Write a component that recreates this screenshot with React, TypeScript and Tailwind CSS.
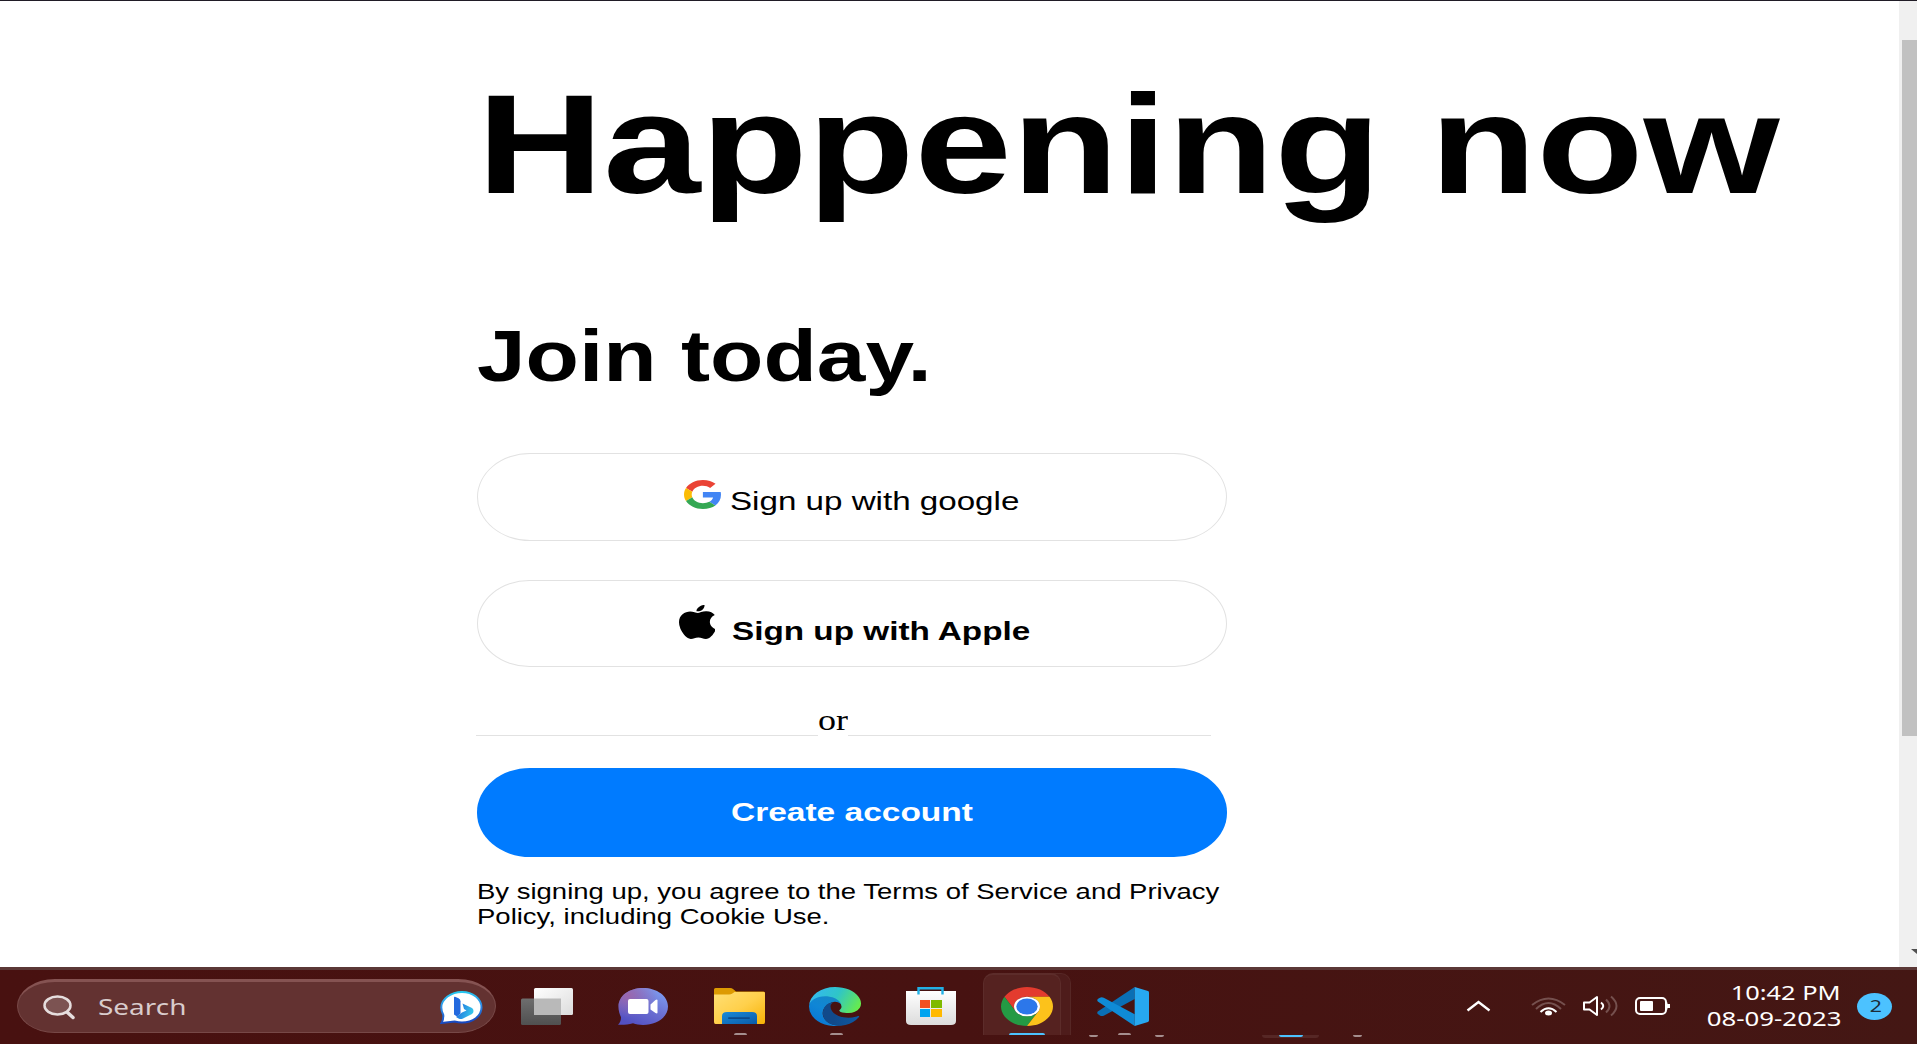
import type { ReactNode } from "react";

const SANS = "font-['Liberation_Sans',Arial,sans-serif]";

function GoogleIcon() {
  return (
    <svg className="h-[29px] w-[37px] shrink-0" viewBox="0 0 47 48" preserveAspectRatio="none">
      <path fill="#EA4335" d="M24 9.5c3.54 0 6.71 1.22 9.21 3.6l6.85-6.85C35.9 2.38 30.47 0 24 0 14.62 0 6.51 5.38 2.56 13.22l7.98 6.19C12.43 13.72 17.74 9.5 24 9.5z" />
      <path fill="#4285F4" d="M46.98 24.55c0-1.57-.15-3.09-.38-4.55H24v9.02h12.94c-.58 2.96-2.26 5.48-4.78 7.18l7.73 6c4.51-4.18 7.09-10.36 7.09-17.65z" />
      <path fill="#FBBC05" d="M10.53 28.59c-.48-1.45-.76-2.99-.76-4.59s.27-3.14.76-4.59l-7.98-6.19C.92 16.46 0 20.12 0 24c0 3.88.92 7.54 2.56 10.78l7.97-6.19z" />
      <path fill="#34A853" d="M24 48c6.48 0 11.93-2.13 15.89-5.81l-7.73-6c-2.15 1.45-4.92 2.3-8.16 2.3-6.26 0-11.57-4.22-13.47-9.91l-7.98 6.19C6.51 42.62 14.62 48 24 48z" />
    </svg>
  );
}

function AppleIcon() {
  return (
    <svg className="h-[34px] w-[36px] shrink-0" viewBox="4 32 367 448" preserveAspectRatio="none">
      <path transform="translate(0 -33.6) scale(1 1.07)" d="M318.7 268.7c-.2-36.7 16.4-64.4 50-84.8-18.8-26.9-47.2-41.7-84.7-44.6-35.5-2.8-74.3 20.7-88.5 20.7-15 0-49.4-19.7-76.4-19.7C63.3 141.2 4 184.8 4 273.5q0 39.3 14.4 81.2c12.8 36.7 59 126.7 107.2 125.2 25.2-.6 43-17.9 75.8-17.9 31.8 0 48.3 17.9 76.4 17.9 48.6-.7 90.4-82.5 102.6-119.3-65.2-30.7-61.7-90-61.7-91.9z" />
      <path transform="translate(15 3) scale(.87 .87)" d="M262.1 104.500c27.3-32.4 24.8-61.9 24-72.5-24.1 1.4-52 16.400-67.9 34.9-17.500 19.8-27.8 34.300-25.6 61.9 26.1 2 49.900-1.400 69.500-24.300z" />
    </svg>
  );
}

function TaskViewIcon() {
  return (
    <svg className="h-[37px] w-[52px]" viewBox="0 0 52 37">
      <defs>
        <linearGradient id="tvw" x1="0" y1="0" x2="1" y2="1">
          <stop offset="0" stopColor="#ffffff" />
          <stop offset="1" stopColor="#dcdcdc" />
        </linearGradient>
        <linearGradient id="tvg" x1="0" y1="0" x2="0" y2="1">
          <stop offset="0" stopColor="#6e6e6e" />
          <stop offset="1" stopColor="#505050" />
        </linearGradient>
      </defs>
      <rect x="0" y="10.500" width="40" height="26.500" rx="1.500" fill="url(#tvg)" />
      <rect x="13" y="0" width="39" height="27" rx="1.500" fill="url(#tvw)" />
      <rect x="13" y="10.500" width="27" height="16.500" fill="#b9b9b9" />
    </svg>
  );
}

function ChatIcon() {
  return (
    <svg className="h-[37px] w-[50px]" viewBox="0 0 50 37">
      <defs>
        <linearGradient id="chat" x1="0.9" y1="0.1" x2="0.3" y2="1">
          <stop offset="0" stopColor="#7d9cf0" />
          <stop offset="0.5" stopColor="#6b6fd2" />
          <stop offset="1" stopColor="#5350c2" />
        </linearGradient>
        <radialGradient id="chatp" cx="0.2" cy="0.2" r="0.6">
          <stop offset="0" stopColor="#a065a8" stopOpacity="0.9" />
          <stop offset="1" stopColor="#a065a8" stopOpacity="0" />
        </radialGradient>
      </defs>
      <path d="M25 0C39 0 50 8 50 18.500S39 37 25 37c-4 0-7-.6-10-1.700-5 1.500-10 1.700-15 1.500 2-2 3-4.500 3-7.500C1.500 26 .5 22.500.5 18.500.5 8 11 0 25 0z" fill="url(#chat)" />
      <path d="M25 0C39 0 50 8 50 18.500S39 37 25 37c-4 0-7-.6-10-1.700-5 1.500-10 1.700-15 1.500 2-2 3-4.500 3-7.500C1.500 26 .5 22.500.5 18.500.5 8 11 0 25 0z" fill="url(#chatp)" />
      <rect x="10" y="11" width="20.500" height="15" rx="2" fill="#fff" />
      <path d="M32.500 16.500l5-4.500q2-1 2 .5v12q0 1.500-2 .5l-5-3.500z" fill="#fff" />
    </svg>
  );
}

function FolderIcon() {
  return (
    <svg className="h-[36px] w-[51px]" viewBox="0 0 51 36">
      <defs>
        <linearGradient id="fold" x1="0" y1="0" x2="1" y2="1">
          <stop offset="0" stopColor="#ffdf75" />
          <stop offset="0.5" stopColor="#ffd04c" />
          <stop offset="1" stopColor="#f7b205" />
        </linearGradient>
        <linearGradient id="foldb" x1="0" y1="0" x2="1" y2="1">
          <stop offset="0" stopColor="#1a8ad8" />
          <stop offset="1" stopColor="#0a5ba8" />
        </linearGradient>
      </defs>
      <path d="M0 1.500Q0 0 1.500 0H16q2 0 3 1l3 2.500H49.500q1.500 0 1.500 1.500V10H0z" fill="#dd9a02" />
      <path d="M0 6.500H15q2 0 3-.8l2.500-1.700H49.500q1.500 0 1.500 1V34q0 2-1.500 2H1.500Q0 36 0 34z" fill="url(#fold)" />
      <path d="M8 36V28q0-4 5-4h25q5 0 5 4v8z" fill="url(#foldb)" />
      <rect x="14" y="29.200" width="22" height="1.800" rx=".9" fill="#0b4a8c" />
    </svg>
  );
}

function EdgeIcon() {
  return (
    <svg className="h-[39px] w-[52px]" viewBox="0 0 256 256" preserveAspectRatio="none">
      <defs>
        <linearGradient id="e1" x1="0.3" y1="0.5" x2="1" y2="0.5">
          <stop offset="0" stopColor="#114a8b" />
          <stop offset="1" stopColor="#0c59a4" />
        </linearGradient>
        <linearGradient id="e2" x1="0.7" y1="0.1" x2="0.2" y2="0.9">
          <stop offset="0" stopColor="#1687c8" />
          <stop offset="0.5" stopColor="#0f86d6" />
          <stop offset="1" stopColor="#0a78d4" />
        </linearGradient>
        <linearGradient id="e3" x1="0" y1="0.3" x2="1" y2="0.6">
          <stop offset="0" stopColor="#35b8f1" />
          <stop offset="0.5" stopColor="#2fc5c8" />
          <stop offset="1" stopColor="#66eb4e" />
        </linearGradient>
      </defs>
      <path fill="url(#e2)" d="M105.7 241.4a79.2 79.2 0 0 1-22.7-21.3 80.700 80.700 0 0 1 29.500-120c3.200-1.500 8.500-4.100 15.600-4a32.400 32.400 0 0 1 25.700 13 31.900 31.900 0 0 1 6.300 18.700c0-.2 24.500-79.600-80-79.600-43.900 0-80 41.700-80 78.200a130.200 130.200 0 0 0 12.100 56 128 128 0 0 0 156.400 67 75.500 75.500 0 0 1-62.800-8z" />
      <path fill="url(#e1)" d="M230.7 190.5a94.900 94.900 0 0 1-10.500 4.700 101.900 101.900 0 0 1-35.900 6.500c-47.300 0-88.500-32.500-88.500-74.300a31.500 31.500 0 0 1 16.400-27.300c-42.800 1.800-53.800 46.400-53.800 72.500 0 73.900 68.100 81.400 82.800 81.400 7.900 0 19.800-2.300 27-4.600l1.300-.4a128.300 128.300 0 0 0 66.600-52.800 4 4 0 0 0-5.400-5.700z" transform="translate(10 0)" />
      <path fill="url(#e3)" d="M152.300 148.900c-.8 1-3.300 2.500-3.300 5.700 0 2.600 1.700 5.100 4.700 7.200 14.400 10 41.500 8.700 41.600 8.700a59.600 59.600 0 0 0 30.300-8.300 61.400 61.400 0 0 0 30.400-52.900c.3-22.400-8-37.300-11.300-43.900C223.500 23.900 177.700 0 128 0A128 128 0 0 0 0 126.200c.5-36.500 36.800-66 80-66 3.500 0 23.500.3 42 10.100 16.300 8.600 24.900 18.900 30.800 29.200 6.200 10.700 7.300 24.100 7.300 29.500s-2.700 13.300-7.800 19.900z" />
    </svg>
  );
}

function StoreIcon() {
  return (
    <svg className="h-[38px] w-[50px]" viewBox="0 0 50 38">
      <defs>
        <linearGradient id="bag" x1="0" y1="0" x2="0" y2="1">
          <stop offset="0" stopColor="#ffffff" />
          <stop offset="1" stopColor="#dcdcdc" />
        </linearGradient>
      </defs>
      <path d="M0 4H50V34q0 4-5 4H5q-5 0-5-4z" fill="url(#bag)" />
      <path d="M12.500 7.500V1.200h24v6.300" fill="none" stroke="#22b1e6" strokeWidth="2.400" />
      <rect x="14" y="13" width="10" height="8" fill="#f25022" />
      <rect x="25" y="13" width="11" height="8" fill="#7fba00" />
      <rect x="14" y="22" width="10" height="8" fill="#00a4ef" />
      <rect x="25" y="22" width="11" height="8" fill="#ffb900" />
    </svg>
  );
}

function ChromeIcon() {
  return (
    <svg className="h-[39px] w-[52px]" viewBox="0 0 100 100" preserveAspectRatio="none">
      <path fill="#e33b2e" d="M6.700 25A50 50 0 0 1 93.300 25L50 25A25 25 0 0 0 28.350 62.500Z" />
      <path fill="#249a44" d="M6.700 25L28.350 62.500A25 25 0 0 0 71.650 62.500L50 100A50 50 0 0 1 6.700 25Z" />
      <path fill="#fcc21b" d="M93.300 25A50 50 0 0 1 50 100L71.650 62.500A25 25 0 0 0 50 25Z" />
      <circle cx="50" cy="50" r="25" fill="#fff" />
      <circle cx="50" cy="50" r="20.500" fill="#2c77ea" />
    </svg>
  );
}

function CodeIcon() {
  return (
    <svg className="h-[39px] w-[52px]" viewBox="0 0 100 100" preserveAspectRatio="none">
      <path fill="#0a6fb5" d="M1.500 63L72.500 0V31L13 73.500Q9 76 5.500 73L1.500 69.500Q-.5 66 1.500 63Z" />
      <path fill="#0f8bd6" d="M1.500 37L5.500 27.500Q9 24.500 13 27.500L72.500 70V100L1.500 37Q-.5 34 1.500 30.500L5.500 27.500Z" />
      <path fill="#27a8f0" d="M72.500 0L98 10.500Q100 11.500 100 14V86Q100 88.500 98 89.500L72.500 100Z" />
    </svg>
  );
}

function BingIcon() {
  return (
    <svg className="h-[33px] w-[43px]" viewBox="0 0 43 33">
      <defs>
        <linearGradient id="bing" x1="0.1" y1="0" x2="0.2" y2="1">
          <stop offset="0" stopColor="#25cdf2" />
          <stop offset="0.5" stopColor="#2d8ce6" />
          <stop offset="1" stopColor="#1848c0" />
        </linearGradient>
        <linearGradient id="bingb" x1="0" y1="0" x2="1" y2="0.3">
          <stop offset="0" stopColor="#1c5fdc" />
          <stop offset="1" stopColor="#35c3ea" />
        </linearGradient>
      </defs>
      <path d="M22 1C33 1 41.500 8 41.500 16.500S33 31.500 22 31.500c-3 0-5-.4-7.500-1L1.500 32q2-3 1.800-8C2 21.500 1.300 19 1.300 16.500 1.300 8 11 1 22 1z" fill="#fff" stroke="url(#bing)" strokeWidth="2" />
      <path d="M14 6.500q0-1 1-.7l3.500 1.400q2 1 2 3v12.300L17 25.500l-3-2z" fill="#2369de" />
      <path d="M22.500 12.500L32 17q1.500 1 1.500 3t-1.500 3L23 27.500q-2 1-4 .2L16 26l6-4.500 4.500-2-2.500-1.500z" fill="url(#bingb)" />
    </svg>
  );
}

function AppSlot({ children, mark }: { children: ReactNode; mark?: boolean }) {
  return (
    <div className="relative flex h-full w-[96px] shrink-0 items-center justify-center">
      {children}
      {mark && <span className="absolute bottom-[7px] left-[43px] h-[2px] w-[13px] rounded-t bg-[#a58e8e]" />}
    </div>
  );
}

function Taskbar() {
  return (
    <footer className="relative flex h-[77px] shrink-0 items-center border-t-[3px] border-[#5b3836] bg-linear-to-r from-[#481110] via-[#471211] to-[#441714] pb-[2px] font-['Noto_Sans','Open_Sans',sans-serif] text-white">
      <div className="ml-[17px] flex h-[54px] w-[479px] shrink-0 items-center rounded-[38px/27px] border border-t-[3px] border-[#774847] border-t-[#855352] bg-[#633231] pr-[12px] pl-[25px]">
        <svg className="h-[25px] w-[33px]" viewBox="0 0 33 25" fill="none" stroke="#e6dede">
          <ellipse cx="14.500" cy="10.500" rx="13" ry="9" strokeWidth="2.500" fill="#7c5352" />
          <path d="M24.500 17.500l5.500 5" strokeWidth="3.500" strokeLinecap="round" />
        </svg>
        <span className="-mt-[2px] ml-[22px] inline-block origin-left scale-x-[1.27] text-[22px] leading-none text-[#d9cccc]">Search</span>
        <span className="ml-auto"><BingIcon /></span>
      </div>
      <nav className="ml-[3px] flex h-full">
        <AppSlot><TaskViewIcon /></AppSlot>
        <AppSlot><ChatIcon /></AppSlot>
        <AppSlot mark><FolderIcon /></AppSlot>
        <AppSlot mark><EdgeIcon /></AppSlot>
        <AppSlot><StoreIcon /></AppSlot>
        <div className="relative flex h-full w-[96px] shrink-0 items-center justify-center">
          <span className="absolute top-[3px] left-[15px] h-[62px] w-[77px] rounded-tr-[10px] border border-b-0 border-[#562725] bg-[#4e1c1b]" />
          <span className="absolute top-[3px] left-[4px] h-[62px] w-[78px] rounded-t-[10px] border border-t-2 border-b-0 border-[#5c2c2a] bg-[#552220]" />
          <span className="relative"><ChromeIcon /></span>
          <span className="absolute bottom-[7px] left-[30px] h-[2px] w-[36px] rounded-t bg-[#4cc2ff]" />
        </div>
        <AppSlot mark><CodeIcon /></AppSlot>
      </nav>
      <span className="absolute bottom-[7px] left-[1089px] h-[2px] w-[9px] rounded-b bg-[#a58e8e]" />
      <span className="absolute bottom-[7px] left-[1155px] h-[2px] w-[9px] rounded-b bg-[#a58e8e]" />
      <span className="absolute bottom-[6px] left-[1262px] h-[3px] w-[57px] rounded-b bg-[#562725]" />
      <span className="absolute bottom-[7px] left-[1279px] h-[2px] w-[24px] rounded-b bg-[#4cc2ff]" />
      <span className="absolute bottom-[7px] left-[1353px] h-[2px] w-[9px] rounded-b bg-[#a58e8e]" />

      <div className="ml-auto flex h-full items-center">
        <svg className="h-[12px] w-[25px]" viewBox="0 0 25 12" fill="none" stroke="#fff" strokeWidth="2.400">
          <path d="M1.500 10.500L12.500 2l11 8.500" />
        </svg>
        <svg className="ml-[40px] h-[19px] w-[35px]" viewBox="0 0 35 19" fill="none" strokeWidth="2">
          <path d="M1 8Q17.500-5 34 8" stroke="#75504e" />
          <path d="M5 12Q17.500 0 30 12" stroke="#75504e" />
          <path d="M9.500 15Q17.500 7.500 25.500 15" stroke="#fff" />
          <ellipse cx="17.500" cy="16" rx="3.500" ry="2.500" fill="#fff" />
        </svg>
        <svg className="ml-[17px] h-[22px] w-[36px]" viewBox="0 0 36 22" fill="none" strokeWidth="2">
          <path d="M1 7.500H6.500L14 2V20L6.500 14.500H1Z" stroke="#fff" strokeLinejoin="round" />
          <path d="M18 7.500Q22.500 11 18 14.500" stroke="#fff" />
          <path d="M23 4.500Q30 11 23 17.500M28 1.500Q39 11 28 20.500" stroke="#75504e" />
        </svg>
        <svg className="ml-[16px] h-[18px] w-[36px]" viewBox="0 0 36 18">
          <rect x="1" y="1" width="30" height="16" rx="4" fill="none" stroke="#fff" strokeWidth="2" />
          <rect x="5" y="4" width="13" height="10" rx="1" fill="#fff" />
          <path d="M31 5.500h1.500v1.500H35v4h-2.500v1.500H31z" fill="#fff" />
        </svg>
        <div className="ml-[28px] flex w-[142px] flex-col items-end text-[20px] leading-[26px]">
          <span className="origin-right scale-x-[1.27] whitespace-nowrap">10:42 PM</span>
          <span className="origin-right scale-x-[1.29] whitespace-nowrap">08-09-2023</span>
        </div>
        <span className="mr-[25px] ml-[16px] flex h-[27px] w-[35px] items-center justify-center rounded-[50%] bg-[#4cc2ff] text-[17px] text-[#1c2c38]">
          <span className="translate-x-[1px] scale-x-[1.25]">2</span>
        </span>
      </div>
    </footer>
  );
}

export default function App() {
  return (
    <div className={`flex h-[1044px] w-[1917px] flex-col overflow-hidden border-t border-[#201c26] bg-white text-black ${SANS}`}>
      <div className="flex min-h-0 flex-1">
        <main className="flex min-w-0 flex-1 flex-col pl-[477px]">
          <h1 className="mt-[63px] h-[160px] origin-left scale-x-[1.241] self-start text-[141px] leading-[160px] font-bold whitespace-nowrap">
            Happening now
          </h1>
          <h2 className="mt-[92px] h-[80px] origin-left scale-x-[1.214] self-start text-[72px] leading-[80px] font-bold whitespace-nowrap">
            Join today.
          </h2>
          <button className="mt-[57px] flex h-[88px] w-[750px] shrink-0 rounded-[53px/44px] border border-[#e2e2e2] pl-[206px]">
            <span className="mt-[26px]"><GoogleIcon /></span>
            <span className="mt-[32px] ml-[9px] inline-block origin-left scale-x-[1.275] text-[26px] leading-[30px] whitespace-nowrap">
              Sign up with google
            </span>
          </button>
          <button className="mt-[39px] flex h-[87px] w-[750px] shrink-0 rounded-[53px/44px] border border-[#e2e2e2] pl-[201px]">
            <span className="mt-[24px]"><AppleIcon /></span>
            <span className="mt-[35px] ml-[17px] inline-block origin-left scale-x-[1.28] text-[26px] leading-[30px] font-bold whitespace-nowrap">
              Sign up with Apple
            </span>
          </button>
          <div className="mt-[33px] -ml-px flex h-[36px] w-[735px] shrink-0 items-end">
            <span className="h-px w-[342px] bg-[#e2e2e2]" />
            <span className="h-[36px] w-[30px] font-['Liberation_Serif',serif] text-[30px] leading-[40px]">
              <span className="inline-block origin-left scale-x-[1.2]">or</span>
            </span>
            <span className="h-px flex-1 bg-[#e2e2e2]" />
          </div>
          <button className="mt-[32px] flex h-[89px] w-[750px] shrink-0 items-center rounded-[53px/44px] bg-[#007bff] pb-[2px] pl-[254px] text-white">
            <span className="inline-block origin-left scale-x-[1.313] text-[25.500px] leading-[30px] font-bold whitespace-nowrap">
              Create account
            </span>
          </button>
          <p className="mt-[23px] origin-left scale-x-[1.222] self-start text-[22.500px] leading-[24.500px] whitespace-nowrap">
            By signing up, you agree to the Terms of Service and Privacy
            <br />
            Policy, including Cookie Use.
          </p>
        </main>
        <div className="flex w-[18px] shrink-0 flex-col bg-[#f0f0f0] pt-[39px] pl-[3px]">
          <div className="h-[696px] bg-[#c1c1c1]" />
          <svg className="mt-[213px] ml-[9px] h-[5px] w-[6px]" viewBox="0 0 6 5">
            <path d="M0 0H6V5z" fill="#505050" />
          </svg>
        </div>
      </div>
      <Taskbar />
    </div>
  );
}
